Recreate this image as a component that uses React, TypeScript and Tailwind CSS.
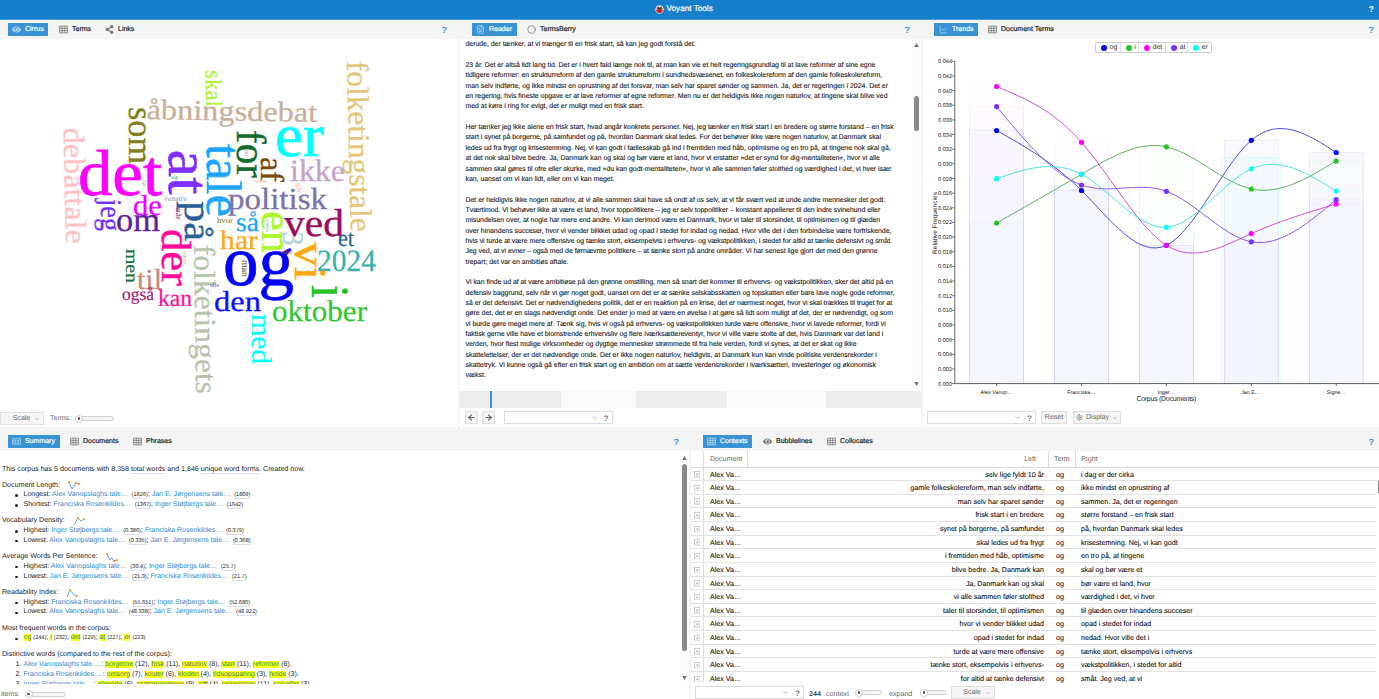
import React from "react";
import { FaEye, FaShareAlt } from "react-icons/fa";
import { LuArrowLeft, LuArrowRight, LuChartLine, LuChevronDown, LuCircle, LuFileText, LuSettings } from "react-icons/lu";

type Icon = React.ComponentType<{ className?: string }>;

function TableIcon({ className }: { className?: string }) {
  return (
    <svg viewBox="0 0 16 16" className={className} fill="none" stroke="currentColor" strokeWidth="1.4">
      <path d="M1 2h14v12H1zM1 6h14M1 10h14M5.7 2v12M10.3 2v12" />
    </svg>
  );
}

function CardIcon({ className }: { className?: string }) {
  return (
    <svg viewBox="0 0 18 14" className={className} fill="none" stroke="currentColor" strokeWidth="1.4">
      <path d="M1 1.5h16v11H1zM3.5 4.5h4v5h-4zM10 5h5M10 7.5h5M10 10h5" />
    </svg>
  );
}

function Tab({ icon: I, label, active, className = "" }: { icon: Icon; label: string; active?: boolean; className?: string }) {
  return (
    <div
      className={`flex h-[13px] shrink-0 items-center gap-[4px] whitespace-nowrap text-[7px] leading-[8px] ${
        active ? "bg-[#3892d4] text-white" : "text-[#222]"
      } ${className}`}
    >
      <I className={`h-[9px] w-[9px] shrink-0 ${active ? "text-[#b4dcf8]" : "text-[#777]"}`} />
      <span className="pt-[1px] [-webkit-text-stroke:0.2px]">{label}</span>
    </div>
  );
}

function Help({ className = "" }: { className?: string }) {
  return <span className={`ml-auto pt-[2px] text-[9px] font-bold leading-none text-[#3d97d6] ${className}`}>?</span>;
}

function Combo({ className = "" }: { className?: string }) {
  return (
    <div className={`flex h-[13px] shrink-0 items-center border border-[#dcdcdc] bg-white ${className}`}>
      <LuChevronDown className="ml-auto h-[7px] w-[7px] text-[#888]" />
      <span className="ml-[6px] mr-[3px] pt-[2px] text-[8px] font-bold leading-none text-[#777]">?</span>
    </div>
  );
}

function Button({ children, className = "" }: { children: React.ReactNode; className?: string }) {
  return (
    <div className={`flex h-[13px] shrink-0 items-center justify-center border border-[#dedede] bg-[#f5f5f5] text-[7px] leading-[8px] text-[#666] ${className}`}>
      {children}
    </div>
  );
}

function Slider({ className = "" }: { className?: string }) {
  return (
    <div className={`flex h-[5px] shrink-0 items-center rounded-full border border-[#d0d0d0] bg-[#f5f5f5] ${className}`}>
      <div className="-ml-px flex h-[8px] w-[8px] items-center justify-center rounded-full border border-[#ccc] bg-white">
        <div className="h-[2.5px] w-[2.5px] rounded-full bg-[#555]" />
      </div>
    </div>
  );
}

type Word = [text: string, x: number, y: number, length: number, size: number, color: string, angle?: number];

const words: Word[] = [
  ["debattale", 63.5, 128, 116, 30, "#ffc2c4", 88.8],
  ["folketingstale", 347, 61, 171, 30.5, "#e3c678", 88.7],
  ["folketingets", 194, 245, 149, 30, "#b5c4ac", 89.2],
  ["åbningsdebat", 146.5, 119, 170.5, 28.5, "#c8b09a", 1],
  ["skal", 205.5, 70, 37, 23, "#adf52f", 90],
  ["som", 129, 107, 57, 35, "#80801a", 90],
  ["er", 275, 156, 49, 61, "#00ffff"],
  ["det", 78, 194.5, 84, 65, "#ff00ff"],
  ["at", 169, 149.5, 45, 59, "#7f2fff", 90],
  ["tale", 206.5, 144, 73, 50, "#1fa5ff", 90],
  ["for", 237, 130, 48, 42, "#136b2d", 90],
  ["af", 261, 157, 25, 33, "#7a4a08", 90],
  ["ikke", 290, 181, 55, 31, "#c5a3cf"],
  ["politisk", 228, 208.5, 99, 30.5, "#7b74a8"],
  ["jeg", 101, 199, 32, 30, "#7030ff", 90],
  ["de", 133, 214.5, 29, 29, "#f000ff"],
  ["om", 116, 231, 44, 34, "#5f249c"],
  ["på", 185, 201, 40, 39, "#2a6099", 90],
  ["ved", 284, 236, 60, 39, "#9b0f5c"],
  ["så", 236, 231, 23, 27, "#1fa5ff"],
  ["en", 262, 211, 42, 44, "#adf52f", 90],
  ["3", 283, 231.5, 14, 30, "#b4d0e2", 90],
  ["har", 220, 248.5, 38, 27, "#ffa812"],
  ["et", 338, 246, 16, 24, "#2a5f95"],
  ["2024", 317, 270.5, 59, 31, "#3cb0a8"],
  ["vi", 295, 242, 38, 46, "#ffa812", 90],
  ["og", 223, 284.5, 71, 71, "#0000ff"],
  ["i", 312, 285, 13, 54, "#28c228", 90],
  ["der", 161.5, 229, 57, 42, "#ff0a9c", 90],
  ["men", 125.5, 249, 34, 18, "#157032", 90],
  ["til", 137, 288.5, 25, 29, "#c98a7a"],
  ["også", 122, 300, 32, 18, "#a0206b"],
  ["kan", 158, 306, 34, 24, "#ff0f9f"],
  ["den", 214, 310.5, 47, 29, "#0f0fff"],
  ["oktober", 272, 320.7, 95, 30, "#35c535"],
  ["med", 251.5, 314, 50, 28, "#00ffff", 90],
  ["hvor", 217, 222.5, 16, 8, "#87873c"],
  ["venstre", 164, 200.5, 23, 7.5, "#8298b4"],
  ["sig", 171, 179, 7, 6, "#4aa04a"],
  ["når", 176, 208, 12, 8, "#8a3a7a", 90],
  ["man", 241.5, 260, 17, 9.5, "#7a5520", 90],
  ["alle", 210, 286.5, 9, 6, "#8060e0"],
  ["eller", 281, 253.5, 11, 6, "#b05050"],
  ["være", 183, 251, 13, 6, "#c8b8a0", 90],
  ["vores", 255, 183, 12, 6, "#e8b87c"],
  ["går", 297, 183, 10, 7, "#ffb0a8", 90],
  ["lige", 142.5, 180, 7, 6, "#88b888", 90],
  ["nu", 245, 150, 6, 6, "#c090c8", 90],
  ["vores", 265.5, 219, 13, 5, "#70b8a0", 90],
  ["hele", 148, 289, 6, 4, "#b05090"],
];

function Cloud() {
  return (
    <svg viewBox="0 39 458 370" className="h-[370px] w-[458px] shrink-0 font-['Liberation_Serif',serif]">
      {words.map(([text, x, y, length, size, color, angle = 0], i) => (
        <text
          key={i}
          transform={`translate(${x} ${y}) rotate(${angle})`}
          fontSize={size}
          fill={color}
          stroke={color}
          strokeWidth={size * 0.01}
          textLength={length}
          lengthAdjust="spacingAndGlyphs"
        >
          {text}
        </text>
      ))}
    </svg>
  );
}

const paragraphs: string[][] = [
  ["derude, der tænker, at vi trænger til en frisk start, så kan jeg godt forstå det."],
  [
    "23 år. Det er altså lidt lang tid. Det er i hvert fald længe nok til, at man kan vie et helt regeringsgrundlag til at lave reformer af sine egne",
    "tidligere reformer: en strukturreform af den gamle strukturreform i sundhedsvæsenet, en folkeskolereform af den gamle folkeskolereform,",
    "man selv indførte, og ikke mindst en oprustning af det forsvar, man selv har sparet sønder og sammen. Ja, det er regeringen i 2024. Det er",
    "en regering, hvis fineste opgave er at lave reformer af egne reformer. Men nu er det heldigvis ikke nogen naturlov, at tingene skal blive ved",
    "med at køre i ring for evigt, det er muligt med en frisk start.",
  ],
  [
    "Her tænker jeg ikke alene en frisk start, hvad angår konkrete personer. Nej, jeg tænker en frisk start i en bredere og større forstand – en frisk",
    "start i synet på borgerne, på samfundet og på, hvordan Danmark skal ledes. For det behøver ikke være nogen naturlov, at Danmark skal",
    "ledes ud fra frygt og krisestemning. Nej, vi kan godt i fællesskab gå ind i fremtiden med håb, optimisme og en tro på, at tingene nok skal gå,",
    "at det nok skal blive bedre. Ja, Danmark kan og skal og bør være et land, hvor vi erstatter »det er synd for dig-mentaliteten«, hvor vi alle",
    "sammen skal gøres til ofre eller skurke, med »du kan godt-mentaliteten«, hvor vi alle sammen føler stolthed og værdighed i det, vi hver især",
    "kan, uanset om vi kan lidt, eller om vi kan meget.",
  ],
  [
    "Det er heldigvis ikke nogen naturlov, at vi alle sammen skal have så ondt af os selv, at vi får svært ved at unde andre mennesker det godt.",
    "Tværtimod. Vi behøver ikke at være et land, hvor toppolitikere – jeg er selv toppolitiker – konstant appellerer til den indre svinehund eller",
    "misundelsen over, at nogle har mere end andre. Vi kan derimod være et Danmark, hvor vi taler til storsindet, til optimismen og til glæden",
    "over hinandens succeser, hvor vi vender blikket udad og opad i stedet for indad og nedad. Hvor ville det i den forbindelse være forfriskende,",
    "hvis vi turde at være mere offensive og tænke stort, eksempelvis i erhvervs- og vækstpolitikken, i stedet for altid at tænke defensivt og småt.",
    "Jeg ved, at vi evner – også med de førnævnte politikere – at tænke stort på andre områder. Vi har senest lige gjort det med den grønne",
    "trepart; det var en ambitiøs aftale.",
  ],
  [
    "Vi kan finde ud af at være ambitiøse på den grønne omstilling, men så snart det kommer til erhvervs- og vækstpolitikken, sker det altid på en",
    "defensiv baggrund, selv når vi gør noget godt, uanset om det er at sænke selskabsskatten og topskatten eller bare lave nogle gode reformer,",
    "så er det defensivt. Det er nødvendighedens politik, det er en reaktion på en krise, det er nærmest noget, hvor vi skal trækkes til truget for at",
    "gøre det, det er en slags nødvendigt onde. Det ender jo med at være en øvelse i at gøre så lidt som muligt af det, der er nødvendigt, og som",
    "vi burde gøre meget mere af. Tænk sig, hvis vi også på erhvervs- og vækstpolitikken turde være offensive, hvor vi lavede reformer, fordi vi",
    "faktisk gerne ville have et blomstrende erhvervsliv og flere iværksættereventyr, hvor vi ville være stolte af det, hvis Danmark var det land i",
    "verden, hvor flest mulige virksomheder og dygtige mennesker strømmede til fra hele verden, fordi vi synes, at det er skat og ikke",
    "skattelettelser, der er det nødvendige onde. Det er ikke nogen naturlov, heldigvis, at Danmark kun kan vinde politiske verdensrekorder i",
    "skattetryk. Vi kunne også gå efter en frisk start og en ambition om at sætte verdensrekorder i iværksætteri, investeringer og økonomisk",
    "vækst.",
  ],
];

function Arrow({ down, className = "" }: { down?: boolean; className?: string }) {
  return (
    <svg viewBox="0 0 6 5" className={`h-[4px] w-[5px] shrink-0 ${className}`} fill="#777">
      <path d={down ? "M0 0h6L3 5z" : "M3 0l3 5H0z"} />
    </svg>
  );
}

const xs = [996.6, 1081.5, 1166.4, 1251.3, 1336.2];
const series = [
  { name: "og", color: "#0000ff", line: "#4848d8", ys: [130.5, 190.5, 245.3, 140.3, 152.5] },
  { name: "i", color: "#28c228", line: "#58ac58", ys: [223, 174.3, 146.8, 189, 161] },
  { name: "det", color: "#ff00ff", line: "#d048d0", ys: [86.5, 142.3, 245.3, 233.6, 204] },
  { name: "at", color: "#7b30ff", line: "#8850e8", ys: [106.6, 185, 191.3, 241.8, 199.7] },
  { name: "er", color: "#00ffff", line: "#48dce0", ys: [178.7, 174.3, 227.3, 168.8, 191] },
];

// Natural cubic spline through evenly spaced points, as Bezier segments.
function spline(ys: number[]): string {
  const n = ys.length;
  const c: number[] = new Array(n).fill(0);
  const d: number[] = new Array(n).fill(0);
  c[0] = 0.5;
  d[0] = (3 * (ys[1] - ys[0])) / 2;
  for (let i = 1; i < n; i++) {
    const last = i === n - 1;
    const b = last ? 2 : 4;
    const r = last ? 3 * (ys[i] - ys[i - 1]) : 3 * (ys[i + 1] - ys[i - 1]);
    const m = b - c[i - 1];
    c[i] = 1 / m;
    d[i] = (r - d[i - 1]) / m;
  }
  const t = [...d];
  for (let i = n - 2; i >= 0; i--) t[i] = d[i] - c[i] * t[i + 1];
  let path = `M${xs[0]} ${ys[0]}`;
  for (let i = 0; i < n - 1; i++) {
    const h = (xs[i + 1] - xs[i]) / 3;
    path += `C${xs[i] + h} ${ys[i] + t[i] / 3} ${xs[i + 1] - h} ${ys[i + 1] - t[i + 1] / 3} ${xs[i + 1]} ${ys[i + 1]}`;
  }
  return path;
}

const docs = ["Alex Vanop…", "Franciska…", "Inger…", "Jan E.…", "Signe…"];

function Chart() {
  const ticks = Array.from({ length: 23 }, (_, i) => i * 2);
  return (
    <svg viewBox="923 55 456 352" className="h-[352px] w-[456px] shrink-0 font-['Liberation_Sans',sans-serif] [text-rendering:geometricPrecision]">
      {xs.map((x, k) => (
        <g key={k}>
          {[...series]
            .reverse()
            .filter((s) => !(k === 3 && s.name === "er"))
            .map((s) => (
              <rect
                key={s.name}
                x={x - 27}
                y={s.ys[k]}
                width={54}
                height={383.5 - s.ys[k]}
                fill={s.color}
                fillOpacity={s.name === "og" ? 0.022 : 0.008}
                stroke={s.color}
                strokeOpacity={s.name === "og" ? 0.08 : 0.055}
                strokeWidth={0.8}
              />
            ))}
        </g>
      ))}
      <rect x={1221.7} y={158} width={58.6} height={225.5} fill="#00ffff" fillOpacity={0.015} stroke="#00ffff" strokeOpacity={0.18} strokeWidth={0.9} />
      {ticks.map((t) => {
        const y = 383.6 - t * 7.325;
        return (
          <g key={t}>
            <path d={`M952 ${y}H955`} stroke="#444" strokeWidth={0.7} />
            <text x={938} y={y + 2} fontSize={5.6} fill="#222" textLength={14}>
              {(t / 1000).toFixed(3)}
            </text>
          </g>
        );
      })}
      <path d="M954.8 61V384M954.8 383.6H1379" stroke="#555" strokeWidth={0.9} fill="none" />
      {xs.map((x, k) => (
        <g key={k}>
          <path d={`M${x} 383.6v2.5`} stroke="#444" strokeWidth={0.8} />
          <text x={x} y={393.6} fontSize={5.3} fill="#111" textAnchor="middle">
            {docs[k]}
          </text>
        </g>
      ))}
      <text x={1166.4} y={401} fontSize={7} fill="#222" textAnchor="middle" textLength={60}>
        Corpus (Documents)
      </text>
      <text transform="translate(937 254) rotate(-90)" fontSize={6.6} fill="#222" textLength={62}>
        Relative Frequencies
      </text>
      {series.map((s) => (
        <path key={s.name} d={spline(s.ys)} fill="none" stroke={s.line} strokeWidth={0.95} />
      ))}
      {series.map((s) => s.ys.map((y, k) => <circle key={s.name + k} cx={xs[k]} cy={y} r={2.6} fill={s.color} />))}
    </svg>
  );
}

function Link({ children }: { children: React.ReactNode }) {
  return <span className="text-[#2f86c8]">{children}</span>;
}
function Small({ children }: { children: React.ReactNode }) {
  return <span className="border-b border-[#dcdcf6] text-[5.6px]">({children})</span>;
}
function Mark({ children }: { children: React.ReactNode }) {
  return <span className="bg-[#ffff1a] text-[#3a8a50]">{children}</span>;
}

const metrics = [
  {
    title: "Document Length:", spark: "M1 1L4 8L8 2L11 3", dots: [[1, 1], [8, 2], [11, 3]],
    rows: [
      ["Longest:", "Alex Vanopslaghs tale…", "1826", "Jan E. Jørgensens tale…", "1809"],
      ["Shortest:", "Franciska Rosenkildes…", "1367", "Inger Støjbergs tale…", "1642"],
    ],
  },
  {
    title: "Vocabulary Density:", spark: "M1 8L5 1L8 4L11 2", dots: [[5, 1], [11, 2]],
    rows: [
      ["Highest:", "Inger Støjbergs tale…", "0.386", "Franciska Rosenkildes…", "0.379"],
      ["Lowest:", "Alex Vanopslaghs tale…", "0.335", "Jan E. Jørgensens tale…", "0.368"],
    ],
  },
  {
    title: "Average Words Per Sentence:", spark: "M1 1L4 7L6 5L8 8L11 7", dots: [[1, 1], [8, 8], [11, 7]],
    rows: [
      ["Highest:", "Alex Vanopslaghs tale…", "30.4", "Inger Støjbergs tale…", "25.7"],
      ["Lowest:", "Jan E. Jørgensens tale…", "21.3", "Franciska Rosenkildes…", "21.7"],
    ],
  },
  {
    title: "Readability Index:", spark: "M1 8L4 1L8 6L11 7", dots: [[4, 1], [11, 7]],
    rows: [
      ["Highest:", "Franciska Rosenkildes…", "55.651", "Inger Støjbergs tale…", "52.680"],
      ["Lowest:", "Alex Vanopslaghs tale…", "48.338", "Jan E. Jørgensens tale…", "48.922"],
    ],
  },
];

const frequent = [["og", "244"], ["i", "232"], ["det", "229"], ["at", "227"], ["er", "223"]];
const distinctive: [string, [string, number][]][] = [
  ["Alex Vanopslaghs tale…", [["borgerne", 12], ["frisk", 11], ["naturlov", 8], ["start", 11], ["reformer", 6]]],
  ["Franciska Rosenkildes…", [["omsorg", 7], ["koster", 6], ["kloden", 4], ["tidsopsparing", 3], ["holde", 3]]],
  ["Inger Støjbergs tale…", [["allerede", 6], ["statsministeren", 9], ["gift", 4], ["regeringen", 11], ["solceller", 3]]],
];

function Bullet({ children }: { children: React.ReactNode }) {
  return (
    <div className="flex h-[9.9px] items-center text-[7px]">
      <span className="ml-[13px] mr-[6px] h-[2.5px] w-[2.5px] rounded-full bg-[#222]" />
      <span className="whitespace-pre">{children}</span>
    </div>
  );
}

function Summary() {
  return (
    <div className="h-[233px] w-[680px] overflow-hidden pl-[2px] pt-[13.5px] text-[7.1px] leading-[9.9px] text-[#222]">
      <div className="whitespace-nowrap">
        This corpus has 5 documents with 8,358 <span className="border-b border-[#dcdcf6]">total words</span> and 1,846{" "}
        <span className="border-b border-[#dcdcf6]">unique word forms</span>. Created now.
      </div>
      {metrics.map((m) => (
        <div key={m.title} className="mt-[6.2px]">
          <div className="flex h-[9.9px] items-center whitespace-nowrap">
            {m.title}
            <svg viewBox="0 0 12 9" className="ml-[8px] h-[9px] w-[12px]" fill="none">
              <path d={m.spark} stroke="#4a9ad8" strokeWidth="0.9" />
              {m.dots.map(([x, y], i) => (
                <circle key={i} cx={x} cy={y} r="1" fill="#ff9020" />
              ))}
            </svg>
          </div>
          {m.rows.map((r) => (
            <Bullet key={r[0]}>
              {r[0]} <Link>{r[1]}</Link>  <Small>{r[2]}</Small>; <Link>{r[3]}</Link>  <Small>{r[4]}</Small>
            </Bullet>
          ))}
        </div>
      ))}
      <div className="mt-[6.2px]">
        <div>Most frequent words in the corpus:</div>
        <Bullet>
          {frequent.map(([w, n], i) => (
            <React.Fragment key={w}>
              <Mark>{w}</Mark> <span className="text-[5.6px]">({n})</span>
              {i < 4 ? "; " : ""}
            </React.Fragment>
          ))}
        </Bullet>
      </div>
      <div className="mt-[6.2px]">
        <div>Distinctive words (compared to the rest of the corpus):</div>
        {distinctive.map(([d, ws], i) => (
          <div key={d} className="flex h-[9.9px] items-center text-[7px]">
            <span className="ml-[13.5px] w-[8px]">{i + 1}.</span>
            <span className="whitespace-pre">
              <Link>{d}</Link> :{" "}
              {ws.map(([w, n], j) => (
                <React.Fragment key={w}>
                  <Mark>{w}</Mark> ({n}){j < 4 ? ", " : "."}
                </React.Fragment>
              ))}
            </span>
          </div>
        ))}
      </div>
    </div>
  );
}

const contexts = [
  ["selv lige fyldt 10 år", "i dag er der cirka"],
  ["gamle folkeskolereform, man selv indførte,", "ikke mindst en oprustning af"],
  ["man selv har sparet sønder", "sammen. Ja, det er regeringen"],
  ["frisk start i en bredere", "større forstand – en frisk start"],
  ["synet på borgerne, på samfundet", "på, hvordan Danmark skal ledes"],
  ["skal ledes ud fra frygt", "krisestemning. Nej, vi kan godt"],
  ["i fremtiden med håb, optimisme", "en tro på, at tingene"],
  ["blive bedre. Ja, Danmark kan", "skal og bør være et"],
  ["Ja, Danmark kan og skal", "bør være et land, hvor"],
  ["vi alle sammen føler stolthed", "værdighed i det, vi hver"],
  ["taler til storsindet, til optimismen", "til glæden over hinandens succeser"],
  ["hvor vi vender blikket udad", "opad i stedet for indad"],
  ["opad i stedet for indad", "nedad. Hvor ville det i"],
  ["turde at være mere offensive", "tænke stort, eksempelvis i erhvervs"],
  ["tænke stort, eksempelvis i erhvervs-", "vækstpolitikken, i stedet for altid"],
  ["for altid at tænke defensivt", "småt. Jeg ved, at vi"],
];

export default function App() {
  return (
    <div className="flex h-[699px] w-[1379px] flex-col overflow-hidden bg-[#f4f4f4] font-['Liberation_Sans',Arial,sans-serif] [text-rendering:geometricPrecision]">
      <header className="flex h-[20px] shrink-0 items-center border-b border-[#4a9bd9] bg-[#157fcc] text-[8.2px] text-white">
        <div className="ml-[655px] flex items-center gap-[2.5px]">
          <svg viewBox="0 0 18 18" className="h-[9px] w-[9px]">
            <circle cx="9" cy="9" r="8.5" fill="#e9e4e2" />
            <path d="M2 9h14a7 7 0 0 1-14 0z" fill="#d7262b" />
            <path d="M3 6l4-3 2 3 3-3 3 4-3 2H6z" fill="#5a3430" />
            <path d="M6 10l3-2 3 2-3 5z" fill="#a31420" />
          </svg>
          <span className="[-webkit-text-stroke:0.2px]">Voyant Tools</span>
        </div>
        <span className="ml-auto mr-[5px] text-[8.5px] font-bold">?</span>
      </header>

      <div className="flex h-[408px] shrink-0">
        <section className="flex w-[460px] shrink-0 flex-col">
          <div className="flex h-[19px] items-center">
            <Tab icon={FaEye} label="Cirrus" active className="ml-[8px] w-[40px] pl-[4px]" />
            <Tab icon={TableIcon} label="Terms" className="ml-[11px] w-[31px]" />
            <Tab icon={FaShareAlt} label="Links" className="ml-[15px]" />
            <Help className="mr-[13px]" />
          </div>
          <div className="flex h-[388px] w-[458px] flex-col bg-white">
            <Cloud />
            <div className="flex items-center pt-[3px]">
              <Button className="w-[44px] gap-[4px] pl-[9px]">
                <span className="pt-[1px]">Scale</span>
                <LuChevronDown className="h-[6px] w-[6px] text-[#888]" />
              </Button>
              <span className="ml-[6px] pt-[1px] text-[7px] leading-[8px] text-[#666]">Terms:</span>
              <Slider className="ml-[4px] w-[39px]" />
            </div>
          </div>
        </section>

        <section className="flex w-[463px] shrink-0 flex-col">
          <div className="flex h-[19px] items-center">
            <Tab icon={LuFileText} label="Reader" active className="ml-[12px] w-[45px] pl-[4px]" />
            <Tab icon={LuCircle} label="TermsBerry" className="ml-[10px]" />
            <Help className="mr-[13px]" />
          </div>
          <div className="flex h-[388px] w-[461px] flex-col bg-white">
            <div className="flex h-[352px]">
              <div className="flex w-[452px] flex-col gap-[10.35px] pl-[5.5px] pt-[1.4px] text-[6.9px] leading-[10.35px] text-[#222]">
                {paragraphs.map((p, i) => (
                  <div key={i}>
                    {p.map((l) => (
                      <p key={l} className="whitespace-nowrap [-webkit-text-stroke:0.12px]">
                        {l}
                      </p>
                    ))}
                  </div>
                ))}
              </div>
              <div className="flex w-[8px] flex-col items-center bg-[#fcfcfc]">
                <Arrow className="mt-[4px]" />
                <div className="mt-[49px] h-[35px] w-[5px] rounded-full bg-[#8a8a8a]" />
                <Arrow down className="mb-[5px] mt-auto" />
              </div>
            </div>
            <div className="flex h-[17px] shrink-0">
              <div className="w-[29.5px] bg-[#ececec]" />
              <div className="w-[2px] bg-[#3892d4]" />
              <div className="w-[69px] bg-[#ececec]" />
              <div className="w-[75.5px] bg-[#fafafa]" />
              <div className="w-[90.5px] bg-[#ececec]" />
              <div className="w-[99px] bg-[#fafafa]" />
              <div className="flex-1 bg-[#ececec]" />
            </div>
            <div className="flex items-center pl-[4.5px] pt-[3px]">
              <Button className="w-[13px]">
                <LuArrowLeft className="h-[9px] w-[9px] shrink-0" strokeWidth={3} />
              </Button>
              <Button className="ml-[4px] w-[13px]">
                <LuArrowRight className="h-[9px] w-[9px] shrink-0" strokeWidth={3} />
              </Button>
              <Combo className="ml-[9px] w-[109px]" />
            </div>
          </div>
        </section>

        <section className="flex w-[456px] shrink-0 flex-col">
          <div className="flex h-[19px] items-center">
            <Tab icon={LuChartLine} label="Trends" active className="ml-[11px] w-[44px] pl-[5px]" />
            <Tab icon={TableIcon} label="Document Terms" className="ml-[10px]" />
            <Help className="mr-[5px]" />
          </div>
          <div className="flex h-[388px] flex-col bg-white">
            <div className="flex h-[16px] shrink-0 items-end pl-[172px] pb-[2px]">
              <div className="flex h-[11px] w-[117px] divide-x divide-[#d8d8d8] rounded-[2px] border border-[#ccc] text-[7px] leading-[8px] text-[#333]">
                {series.map((s, i) => (
                  <div key={s.name} className={`flex items-center gap-[2.5px] pl-[5px] ${["w-[25px]", "w-[18px]", "w-[27px]", "w-[22px]", "w-[23px]"][i]}`}>
                    <svg viewBox="0 0 6 6" className="h-[6px] w-[6px] shrink-0">
                      <circle cx="3" cy="3" r="3" fill={s.color} />
                    </svg>
                    <span className="pt-[1px]">{s.name}</span>
                  </div>
                ))}
              </div>
            </div>
            <Chart />
            <div className="flex items-center pl-[4px] pt-[4px]">
              <Combo className="w-[109px]" />
              <Button className="ml-[5px] w-[26px]">
                <span className="pt-[1px]">Reset</span>
              </Button>
              <Button className="ml-[6px] w-[48px] gap-[3px]">
                <LuSettings className="h-[7px] w-[7px]" />
                <span className="pt-[1px]">Display</span>
                <LuChevronDown className="h-[6px] w-[6px] text-[#888]" />
              </Button>
            </div>
          </div>
        </section>
      </div>

      <div className="flex h-[271px] shrink-0">
        <section className="flex w-[691px] shrink-0 flex-col">
          <div className="flex h-[23px] items-center pt-[4px]">
            <Tab icon={CardIcon} label="Summary" active className="ml-[8px] w-[52px] pl-[4px]" />
            <Tab icon={TableIcon} label="Documents" className="ml-[10px] w-[48px]" />
            <Tab icon={TableIcon} label="Phrases" className="ml-[15px]" />
            <Help className="mr-[12px]" />
          </div>
          <div className="flex h-[248px] w-[689px] flex-col bg-white">
            <div className="flex h-[233px]">
              <Summary />
              <div className="flex w-[8px] flex-col items-center bg-[#fcfcfc]">
                <Arrow className="mt-[5px]" />
                <div className="mt-[4px] h-[187px] w-[5px] rounded-full bg-[#8a8a8a]" />
                <Arrow down className="mb-[4px] mt-auto" />
              </div>
            </div>
            <div className="flex items-center pt-[4px]">
              <span className="ml-[1px] pt-[2px] text-[7px] leading-[10px] text-[#666]">items:</span>
              <Slider className="ml-[5px] w-[41px]" />
            </div>
          </div>
        </section>

        <section className="flex w-[688px] shrink-0 flex-col">
          <div className="flex h-[23px] items-center pt-[4px]">
            <Tab icon={TableIcon} label="Contexts" active className="ml-[12px] w-[49px] pl-[4px]" />
            <Tab icon={FaEye} label="Bubblelines" className="ml-[11px] w-[49px]" />
            <Tab icon={TableIcon} label="Collocates" className="ml-[15px]" />
            <Help className="mr-[5px]" />
          </div>
          <div className="flex h-[248px] w-[688px] flex-col bg-white">
            <div className="flex h-[16.6px] shrink-0 border-b border-[#d9d9d9] text-[7.1px] leading-[17.6px] text-[#666]">
              <div className="w-[13px] border-r border-[#ddd]" />
              <div className="w-[44px] border-r border-[#ddd] pl-[6px]">Document</div>
              <div className="w-[301px] border-r border-[#ddd] pr-[12px] text-right">Left</div>
              <div className="w-[27px] border-r border-[#ddd] pl-[5px]">Term</div>
              <div className="pl-[5px]">Right</div>
            </div>
            <div className="flex h-[217px] overflow-hidden">
              <div className="w-[685px] text-[7.1px] leading-[15.2px] text-[#111]">
                {contexts.map(([l, r], i) => (
                  <div key={i} className="flex h-[13.63px] whitespace-nowrap border-b border-[#e2e2e2] [-webkit-text-stroke:0.1px]">
                    <div className="flex w-[13px] items-center justify-center border-r border-[#ddd] pt-[1px]">
                      <svg viewBox="0 0 7 7" className="h-[6.5px] w-[6.5px]" fill="none" stroke="#aaa" strokeWidth="0.7">
                        <path d="M.5.5h6v6h-6zM2 3.5h3M3.5 2v3" />
                      </svg>
                    </div>
                    <div className="w-[44px] pl-[6px]">Alex Va…</div>
                    <div className="w-[296px] text-right">{l}</div>
                    <div className="w-[37px] pl-[12px]">og</div>
                    <div>{r}</div>
                  </div>
                ))}
              </div>
              <div className="flex flex-1 flex-col items-end">
                <div className="mt-[13px] h-[12px] w-[1.5px] bg-[#8a8a8a]" />
              </div>
            </div>
            <div className="flex items-center pl-[4px] pt-[3px] text-[7.1px] leading-[8px] text-[#666]">
              <Combo className="w-[109px]" />
              <span className="ml-[5px] w-[17px] pt-[2px] font-bold text-[#444]">244</span>
              <span className="w-[29px] pt-[2px]">context</span>
              <Slider className="w-[27px]" />
              <span className="ml-[7px] w-[31px] pt-[2px]">expand</span>
              <Slider className="w-[27px]" />
              <Button className="ml-[4px] w-[44px] gap-[4px] pl-[8px]">
                <span className="pt-[1px]">Scale</span>
                <LuChevronDown className="h-[6px] w-[6px] text-[#888]" />
              </Button>
            </div>
          </div>
        </section>
      </div>
    </div>
  );
}
